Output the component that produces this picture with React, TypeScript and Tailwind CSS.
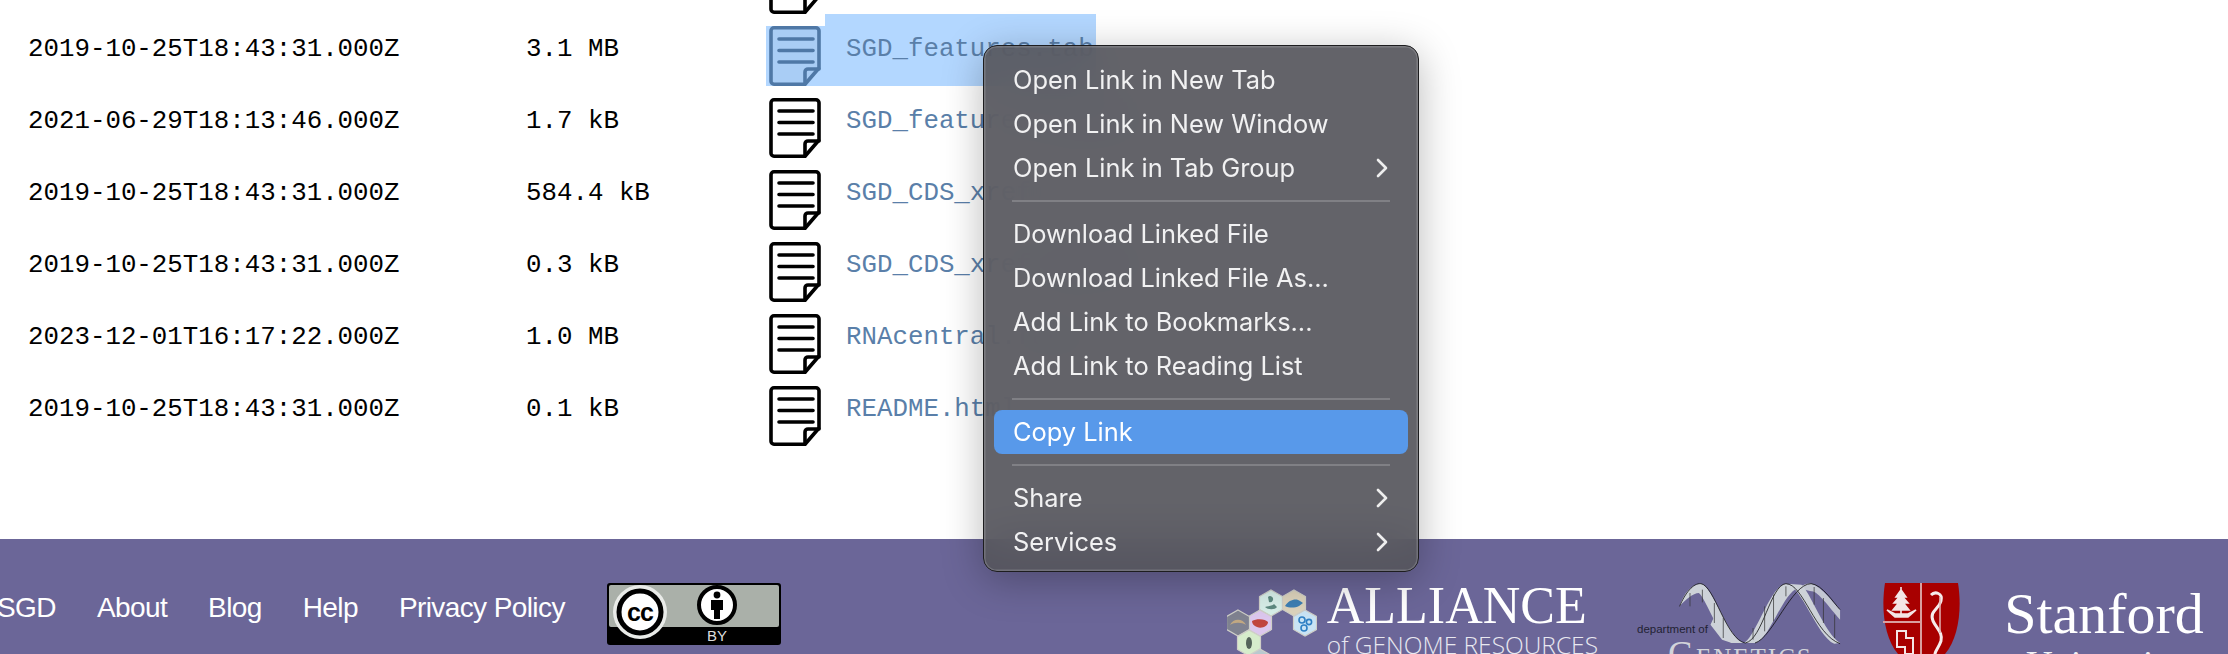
import { ReactNode } from "react"

const files = [
  { date: "2019-10-25T18:43:31.000Z", size: "3.1 MB", name: "SGD_features.tab" },
  { date: "2019-10-25T18:43:31.000Z", size: "3.1 MB", name: "SGD_features.tab", selected: true },
  { date: "2021-06-29T18:13:46.000Z", size: "1.7 kB", name: "SGD_features.README" },
  { date: "2019-10-25T18:43:31.000Z", size: "584.4 kB", name: "SGD_CDS_xref.txt" },
  { date: "2019-10-25T18:43:31.000Z", size: "0.3 kB", name: "SGD_CDS_xref.README" },
  { date: "2023-12-01T16:17:22.000Z", size: "1.0 MB", name: "RNAcentral.fasta" },
  { date: "2019-10-25T18:43:31.000Z", size: "0.1 kB", name: "README.html" },
]

const FileIcon = ({ selected }: { selected?: boolean }) => {
  const ink = selected ? "#4f78a6" : "#000000"
  return (
    <svg width="52" height="60" viewBox="0 0 52 60" fill="none" stroke={ink} strokeWidth="3.6" strokeLinejoin="round" strokeLinecap="round">
      <path d="M5 1.8H47a3 3 0 0 1 3 3V42L36 58.2H5a3 3 0 0 1-3-3V4.8a3 3 0 0 1 3-3Z" fill={selected ? "#a9cdf5" : "#ffffff"} />
      <path d="M36 58V46a3 3 0 0 1 3-3H50" />
      <path d="M10 13H44M10 24.5H44M10 36H44" />
    </svg>
  )
}

const FileRow = ({ date, size, name, selected }: { date: string; size: string; name: string; selected?: boolean }) => (
  <div className="flex h-[72px] pl-[28px] text-[25.8px] text-black font-['Liberation_Mono',monospace]">
    <div className="w-[498px] flex items-center whitespace-pre">{date}</div>
    <div className="w-[240px] flex items-center whitespace-pre">{size}</div>
    <div className={`w-[59px] h-[60px] mt-[12px] pl-[3px] ${selected ? "bg-[#b3d7ff]" : ""}`}>
      <FileIcon selected={selected} />
    </div>
    <div className={`w-[271px] pl-[21px] flex items-center whitespace-pre text-[#5a7fa9] ${selected ? "bg-[#b3d7ff] text-[#4f78a6]" : ""}`}>{name}</div>
  </div>
)

const Chevron = () => (
  <svg width="12" height="20" viewBox="0 0 12 20" fill="none" stroke="#eeeeee" strokeWidth="2.6" strokeLinecap="round" strokeLinejoin="round">
    <path d="M2 2L10 10L2 18" />
  </svg>
)

const MenuItem = ({ children, arrow, active }: { children: ReactNode; arrow?: boolean; active?: boolean }) => (
  <div className={`flex h-[44px] mx-[10px] pl-[19px] pr-[20px] items-center justify-between rounded-[8px] ${active ? "bg-[#5899ea] text-white" : ""}`}>
    <span>{children}</span>
    {arrow && <Chevron />}
  </div>
)

const Separator = () => <div className="h-[2px] mx-[28px] my-[10px] bg-[#808085]" />

const ContextMenu = () => (
  <div className="absolute left-[983px] top-[45px] w-[436px] h-[527px] py-[12px] rounded-[14px] border border-[#1d1d1f] bg-[rgba(84,84,90,0.91)] backdrop-blur-xl text-[25.4px] text-[#f1f1f2] font-['Inter',sans-serif] shadow-[0_8px_40px_rgba(0,0,0,0.28),inset_0_0_0_1.5px_rgba(255,255,255,0.16)]">
    <MenuItem>Open Link in New Tab</MenuItem>
    <MenuItem>Open Link in New Window</MenuItem>
    <MenuItem arrow>Open Link in Tab Group</MenuItem>
    <Separator />
    <MenuItem>Download Linked File</MenuItem>
    <MenuItem>Download Linked File As...</MenuItem>
    <MenuItem>Add Link to Bookmarks...</MenuItem>
    <MenuItem>Add Link to Reading List</MenuItem>
    <Separator />
    <MenuItem active>Copy Link</MenuItem>
    <Separator />
    <MenuItem arrow>Share</MenuItem>
    <MenuItem arrow>Services</MenuItem>
  </div>
)

const CcBadge = () => (
  <svg width="174" height="62" viewBox="0 0 174 62" className="ml-[42px] shrink-0">
    <rect x="0" y="0" width="174" height="62" rx="3" fill="#000000" />
    <rect x="2" y="2" width="170" height="42" rx="2" fill="#aab0a9" />
    <circle cx="33" cy="29" r="27" fill="#e9ebe8" />
    <circle cx="33" cy="29" r="21" fill="#ffffff" stroke="#000000" strokeWidth="5" />
    <text x="33" y="38" textAnchor="middle" fontSize="25" fontWeight="700" fontFamily="Liberation Sans, sans-serif" fill="#000000" letterSpacing="-1">cc</text>
    <circle cx="110" cy="22" r="18" fill="#ffffff" stroke="#000000" strokeWidth="4" />
    <circle cx="110" cy="12" r="3.4" fill="#000000" />
    <path d="M104 17H116V27H113V36H107V27H104Z" fill="#000000" />
    <text x="110" y="58" textAnchor="middle" fontSize="15" fontFamily="Liberation Sans, sans-serif" fill="#dddddd">BY</text>
  </svg>
)

const Hex = ({ x, y, fill, children }: { x: number; y: number; fill: string; children?: ReactNode }) => (
  <g transform={`translate(${x} ${y})`}>
    <path d="M0-13L11.5-6.5V6.5L0 13L-11.5 6.5V-6.5Z" fill={fill} stroke="#cfcfc8" strokeWidth="1.2" />
    {children}
  </g>
)

const AllianceLogo = () => (
  <div className="flex shrink-0">
    <svg width="90" height="71" viewBox="0 0 90 71" className="mt-[3px]">
      <Hex x={44} y={17} fill="#d8efe9">
        <path d="M-6 4C-3 7 4 7 6 4L3 1C1 3-3 3-6 4ZM-3-6A3 3 0 1 1-2-1Z" fill="#5e8a80" />
      </Hex>
      <Hex x={67} y={17} fill="#ddd4bd">
        <path d="M-9 3C-5-4 3-5 6-2L9 0L5 3C1 5-5 5-9 3Z" fill="#3d7fb4" />
      </Hex>
      <Hex x={78} y={37} fill="#c9e4f5">
        <circle cx="-3" cy="-3" r="3" fill="none" stroke="#2f80c4" strokeWidth="1.6" />
        <circle cx="4" cy="-1" r="2.6" fill="none" stroke="#2f80c4" strokeWidth="1.6" />
        <circle cx="-1" cy="5" r="3" fill="none" stroke="#2f80c4" strokeWidth="1.6" />
      </Hex>
      <Hex x={33} y={37} fill="#dcc7ee">
        <path d="M-8-2C-3-5 6-4 8-1C8 3 2 6-3 4C-6 3-8 1-8-2Z" fill="#c0453f" />
      </Hex>
      <Hex x={11} y={37} fill="#7f8290">
        <path d="M-8 2C-5-5 5-5 8 2C4-1-4-1-8 2Z" fill="#c2a983" />
      </Hex>
      <Hex x={22} y={57} fill="#d6eccb">
        <ellipse cx="0" cy="0" rx="3" ry="6" fill="#55645a" />
      </Hex>
      <Hex x={33} y={76} fill="#b8c9cf" />
    </svg>
    <div className="ml-[10px] flex flex-col text-white">
      <span className="text-[52px] leading-[46px] tracking-[0px] font-['Liberation_Serif',serif]">ALLIANCE</span>
      <span className="mt-[3px] text-[24.5px] leading-[26px] text-[#e8e8f0] whitespace-nowrap font-['Open_Sans',sans-serif] font-light">of GENOME RESOURCES</span>
    </div>
  </div>
)

const GeneticsLogo = () => (
  <div className="relative ml-[39px] w-[205px] h-[71px] shrink-0">
    <svg width="205" height="71" viewBox="45 70 530 213" preserveAspectRatio="none">
      <path d="M155 140C165 100 190 70 210 72C240 75 280 235 320 250L290 250C255 230 225 120 205 100C190 100 170 120 155 140Z" fill="#cdd2d8" />
      <path d="M235 195L265 240L290 250L320 250C290 235 260 190 245 170Z" fill="#cdd2d8" />
      <path d="M320 250C350 240 390 75 430 72L460 85C420 105 385 245 350 250Z" fill="#cdd2d8" />
      <path d="M430 72C470 75 510 230 555 252L570 250C530 220 490 90 470 75Z" fill="#cdd2d8" />
      <path d="M460 85C475 75 485 70 495 72C520 78 550 125 570 150L570 180C540 140 510 90 495 95Z" fill="#cdd2d8" opacity="0.9" />
      <path d="M155 140C170 100 190 70 210 72C245 76 275 240 325 250C370 240 390 75 430 72C475 72 505 225 570 252" fill="none" stroke="#111111" strokeWidth="2.2" />
      <path d="M350 250C395 235 445 72 495 72C525 76 550 125 570 150" fill="none" stroke="#111111" strokeWidth="2.2" />
      <path d="M182 100V140M214 90V128M245 130V190M268 175V235M345 205V240M375 140V215M398 105V185M430 80V110M503 82V135M527 115V190M556 165V235" stroke="#333333" strokeWidth="2" />
    </svg>
    <span className="absolute left-0 top-[39px] text-[11.5px] leading-[14px] text-[#222233] font-['Liberation_Sans',sans-serif] whitespace-nowrap">department of</span>
    <span className="absolute left-[31px] top-[53px] text-[36px] leading-[36px] tracking-[2px] text-[#d2d4da] [font-variant:small-caps] font-['Liberation_Serif',serif]">Genetics</span>
  </div>
)

const StanfordShield = () => (
  <svg width="77" height="71" viewBox="0 0 77 71" className="ml-[41px] shrink-0">
    <path d="M2 0H75C79 25 76 55 62 71H15C1 55-2 25 2 0Z" fill="#a80000" />
    <path d="M38 0V71M0 39H38" stroke="#d9a0a0" strokeWidth="2" />
    <path d="M18 4V33M18 7L13 14H23ZM18 12L11 20H25ZM18 17L10 27H26ZM4 27L12 34H25L33 27L25 31H12Z" stroke="#f4e6e6" strokeWidth="1.6" fill="#f4e6e6" />
    <path d="M48 12C52 8 60 10 58 18C56 26 46 28 50 38C54 46 60 50 58 58C56 64 52 68 52 71" fill="none" stroke="#f6ecec" strokeWidth="3" />
    <path d="M57 14V50" stroke="#e2b4b4" strokeWidth="1.5" />
    <path d="M14 48H23V55H30V71H22V64H14Z" fill="none" stroke="#f4e6e6" strokeWidth="2" />
  </svg>
)

const StanfordLogo = () => (
  <div className="ml-[44px] w-[200px] shrink-0 flex flex-col items-center text-white font-['Liberation_Serif',serif]">
    <span className="text-[58px] leading-[62px]">Stanford</span>
    <span className="text-[37px] leading-[40px] text-[#f3f3f6]">University</span>
  </div>
)

const Footer = () => (
  <div className="flex h-[115px] items-start pt-[44px] pr-[24px] overflow-hidden bg-[#6b6698]">
    <nav className="flex h-[50px] -ml-[3px] items-center gap-[41px] text-[28px] tracking-[-0.6px] text-white font-['Liberation_Sans',sans-serif] whitespace-nowrap">
      <span>SGD</span>
      <span>About</span>
      <span>Blog</span>
      <span>Help</span>
      <span>Privacy Policy</span>
    </nav>
    <CcBadge />
    <div className="ml-auto flex">
      <AllianceLogo />
      <GeneticsLogo />
      <StanfordShield />
      <StanfordLogo />
    </div>
  </div>
)

export default function App() {
  return (
    <div className="relative w-[2228px] h-[654px] overflow-hidden bg-white">
      <div className="h-[539px] overflow-hidden">
        <div className="-mt-[58px]">
          {files.map((f, i) => (
            <FileRow key={i} {...f} />
          ))}
        </div>
      </div>
      <Footer />
      <ContextMenu />
    </div>
  )
}
